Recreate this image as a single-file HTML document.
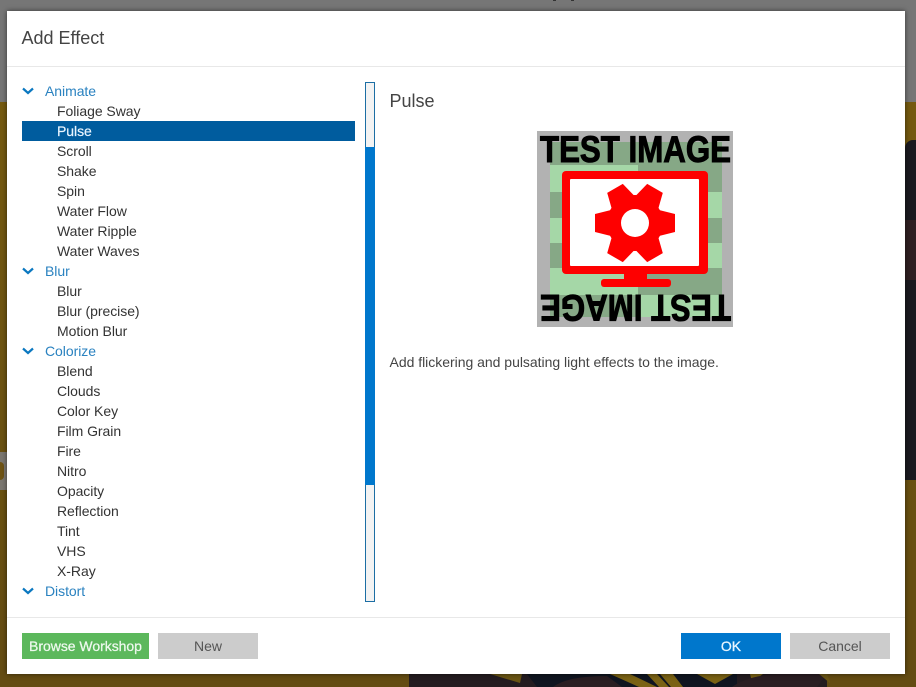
<!DOCTYPE html>
<html><head><meta charset="utf-8">
<style>
html,body{margin:0;padding:0;width:916px;height:687px;overflow:hidden;background:#6b5010;font-family:"Liberation Sans",Arial,sans-serif}
.abs{position:absolute}
#dlg{position:absolute;left:7px;top:11px;width:898px;height:663px;background:#fff;box-shadow:0 0 5px rgba(0,0,0,.55)}
.r{position:absolute;left:57px;height:20px;line-height:20px;font-size:14px;color:#333;white-space:nowrap;letter-spacing:-.05px}
.g{position:absolute;left:45px;height:20px;line-height:20px;font-size:14px;color:#2a82c0;white-space:nowrap;letter-spacing:-.05px}
.c{position:absolute;left:22px;width:13px;height:8px}
.b{position:absolute;top:633px;height:26px;line-height:26px;text-align:center;font-size:14px}
</style></head><body>
<div class="abs" style="left:0;top:0;width:916px;height:102px;background:#767676"></div>
<div class="abs" style="left:553px;top:0;width:3px;height:1px;background:#333"></div>
<div class="abs" style="left:571px;top:0;width:3px;height:1px;background:#333"></div>
<div class="abs" style="left:0;top:102px;width:916px;height:585px;background:linear-gradient(#755a10,#644c12)"></div>
<div class="abs" style="left:0;top:452px;width:7px;height:38px;background:#7b7770"></div>
<div class="abs" style="left:0;top:462px;width:4px;height:18px;border-radius:0 9px 9px 0;background:#6e5314"></div>
<div class="abs" style="left:905px;top:140px;width:11px;height:340px;background:#1b1a20;border-radius:8px 0 0 0"></div>
<div class="abs" style="left:905px;top:220px;width:11px;height:60px;background:#2f1f22"></div>
<svg class="abs" style="left:407px;top:674px" width="423" height="13" viewBox="0 0 423 13">
<rect x="2" width="418" height="13" fill="#241c20"/>
<path d="M83 0H115L113 9Z" fill="#6a5514"/>
<path d="M120 0H330V13H130Z" fill="#101520"/>
<path d="M146 13Q160 2 200 2L215 13Z" fill="#2a1e22"/>
<path d="M203 0H223L250 13H232Z" fill="#7a6214"/>
<path d="M240 0H250L262 13H252ZM253 0H266L276 13H264Z" fill="#7a6214"/>
<path d="M290 0H326L308 10Z" fill="#7a6214"/>
<path d="M343 0H356L345 8Z" fill="#7a6214"/>
<path d="M325 13Q340 2 370 0H420L410 13Z" fill="#2a1e22"/>
<path d="M412 0H420L424 10Z" fill="#6a5514"/>
</svg>
<div id="dlg"></div>
<div class="abs" style="left:7px;top:66px;width:898px;height:1px;background:#e8e8e8"></div>
<div class="abs" style="left:7px;top:617px;width:898px;height:1px;background:#e8e8e8"></div>
<div class="abs" style="left:21.5px;top:27px;font-size:18px;line-height:22px;color:#444">Add Effect</div>

<div class="abs" style="left:22px;top:121px;width:333px;height:20px;background:#005c9e"></div>

<svg class="c" style="top:87px" viewBox="0 0 13 8"><path d="M1 1.5L6 6L11 1.5" fill="none" stroke="#0b78c0" stroke-width="2.2"/></svg>
<div class="g" style="top:81px">Animate</div>
<div class="r" style="top:101px">Foliage Sway</div>
<div class="r" style="top:121px;color:#e8f4ff;-webkit-text-stroke:.2px #e8f4ff">Pulse</div>
<div class="r" style="top:141px">Scroll</div>
<div class="r" style="top:161px">Shake</div>
<div class="r" style="top:181px">Spin</div>
<div class="r" style="top:201px">Water Flow</div>
<div class="r" style="top:221px">Water Ripple</div>
<div class="r" style="top:241px">Water Waves</div>
<svg class="c" style="top:267px" viewBox="0 0 13 8"><path d="M1 1.5L6 6L11 1.5" fill="none" stroke="#0b78c0" stroke-width="2.2"/></svg>
<div class="g" style="top:261px">Blur</div>
<div class="r" style="top:281px">Blur</div>
<div class="r" style="top:301px">Blur (precise)</div>
<div class="r" style="top:321px">Motion Blur</div>
<svg class="c" style="top:347px" viewBox="0 0 13 8"><path d="M1 1.5L6 6L11 1.5" fill="none" stroke="#0b78c0" stroke-width="2.2"/></svg>
<div class="g" style="top:341px">Colorize</div>
<div class="r" style="top:361px">Blend</div>
<div class="r" style="top:381px">Clouds</div>
<div class="r" style="top:401px">Color Key</div>
<div class="r" style="top:421px">Film Grain</div>
<div class="r" style="top:441px">Fire</div>
<div class="r" style="top:461px">Nitro</div>
<div class="r" style="top:481px">Opacity</div>
<div class="r" style="top:501px">Reflection</div>
<div class="r" style="top:521px">Tint</div>
<div class="r" style="top:541px">VHS</div>
<div class="r" style="top:561px">X-Ray</div>
<svg class="c" style="top:587px" viewBox="0 0 13 8"><path d="M1 1.5L6 6L11 1.5" fill="none" stroke="#0b78c0" stroke-width="2.2"/></svg>
<div class="g" style="top:581px">Distort</div>

<div class="abs" style="left:365px;top:82px;width:8px;height:518px;border:1px solid #1c6ea4;background:#f3f3f3"></div>
<div class="abs" style="left:365px;top:147px;width:10px;height:338px;background:#0077cc"></div>

<div class="abs" style="left:389.5px;top:90px;font-size:18px;line-height:22px;color:#444">Pulse</div>

<svg class="abs" style="left:537px;top:131px" width="196" height="196" viewBox="0 0 196 196">
<rect width="196" height="196" fill="#b2b2b2"/>
<rect x="13" y="11" width="172" height="175" fill="#a5d7a7"/>
<g fill="#86a886">
<rect x="13" y="11" width="172" height="23"/>
<rect x="101" y="34" width="84" height="27"/>
<rect x="13" y="61" width="88" height="26"/>
<rect x="101" y="87" width="84" height="25"/>
<rect x="13" y="112" width="88" height="25"/>
<rect x="101" y="137" width="84" height="27"/>
<rect x="13" y="164" width="88" height="22"/>
</g>
<text x="3" y="31" font-family="'Liberation Sans',sans-serif" font-weight="bold" font-size="37" textLength="191" lengthAdjust="spacingAndGlyphs" fill="#000" stroke="#000" stroke-width="1">TEST IMAGE</text>
<text x="2" y="0" transform="translate(196,164) rotate(180)" font-family="'Liberation Sans',sans-serif" font-weight="bold" font-size="37" textLength="191" lengthAdjust="spacingAndGlyphs" fill="#000" stroke="#000" stroke-width="1">TEST IMAGE</text>
<rect x="25" y="40" width="146" height="103" rx="4" fill="#fe0000"/>
<rect x="33" y="48" width="129" height="87" rx="1" fill="#fff"/>
<rect x="87" y="143" width="23" height="6" fill="#fe0000"/>
<rect x="64" y="148" width="70" height="8" rx="3" fill="#fe0000"/>
<g transform="translate(98,92)" fill="#fe0000">
<circle r="28"/>
<path d="M24 -13L40 -9V9L24 13Z"/>
<path d="M24 -13L40 -9V9L24 13Z" transform="rotate(60)"/>
<path d="M24 -13L40 -9V9L24 13Z" transform="rotate(120)"/>
<path d="M24 -13L40 -9V9L24 13Z" transform="rotate(180)"/>
<path d="M24 -13L40 -9V9L24 13Z" transform="rotate(240)"/>
<path d="M24 -13L40 -9V9L24 13Z" transform="rotate(300)"/>
<circle r="14" fill="#fff"/>
</g>
</svg>

<div class="abs" style="left:389.5px;top:352px;font-size:14px;line-height:20px;color:#444;white-space:nowrap;letter-spacing:-.02px">Add flickering and pulsating light effects to the image.</div>

<div class="b" style="left:22px;width:127px;background:#5cb85c;color:#eef9ee;-webkit-text-stroke:.25px #eef9ee;letter-spacing:-.03px">Browse Workshop</div>
<div class="b" style="left:158px;width:100px;background:#cccccc;color:#555">New</div>
<div class="b" style="left:681px;width:100px;background:#0077cc;color:#eaf6ff;-webkit-text-stroke:.25px #eaf6ff">OK</div>
<div class="b" style="left:790px;width:100px;background:#cccccc;color:#555">Cancel</div>
</body></html>
